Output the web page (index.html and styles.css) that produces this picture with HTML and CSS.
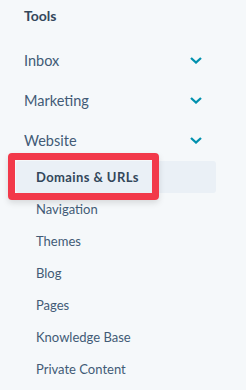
FILE: index.html
```html
<!DOCTYPE html>
<html lang="en">
<head>
  <meta charset="UTF-8">
  <meta name="viewport" content="width=device-width, initial-scale=1.0">
  <title>Tools</title>
  <link rel="stylesheet" href="styles.css">
</head>
<body>
  <nav class="sidebar">
    <h2 class="sidebar-title">Tools</h2>

    <!-- Top level sections -->
    <div class="section">
      <span>Inbox</span>
      <svg class="chevron" viewBox="0 0 12 7"><path d="M1 1l5 4.5L11 1"/></svg>
    </div>
    <div class="section">
      <span>Marketing</span>
      <svg class="chevron" viewBox="0 0 12 7"><path d="M1 1l5 4.5L11 1"/></svg>
    </div>
    <div class="section">
      <span>Website</span>
      <svg class="chevron" viewBox="0 0 12 7"><path d="M1 1l5 4.5L11 1"/></svg>
    </div>

    <!-- Website sub menu -->
    <ul class="sub-list">
      <li class="sub-item active">Domains &amp; URLs<span class="callout"></span></li>
      <li class="sub-item">Navigation</li>
      <li class="sub-item">Themes</li>
      <li class="sub-item">Blog</li>
      <li class="sub-item">Pages</li>
      <li class="sub-item">Knowledge Base</li>
      <li class="sub-item">Private Content</li>
    </ul>
  </nav>
</body>
</html>
```

FILE: styles.css
```css
/* Reset */
* {
  margin: 0;
  padding: 0;
  box-sizing: border-box;
  font-family: Lato, "Noto Sans", sans-serif;
}

body {
  background-color: #f5f8fa;
  color: #33475b;
}

/* Sidebar */
.sidebar {
  width: 216px;
  padding-top: 6px;
}

.sidebar-title {
  font-size: 14px;
  font-weight: bold;
  line-height: 20px;
  padding-left: 24px;
  margin-bottom: 14px;
  color: #33475b;
}

.section {
  display: flex;
  justify-content: space-between;
  align-items: center;
  height: 40px;
  padding: 0 14px 0 24px;
  font-size: 14.5px;
  color: #425b76;
}

.chevron {
  width: 12px;
  height: 7px;
  fill: none;
  stroke: #0091ae;
  stroke-width: 2.3;
}

/* Sub menu */
.sub-list {
  list-style: none;
  margin-top: 1px;
}

.sub-item {
  position: relative;
  height: 32px;
  line-height: 32px;
  margin-left: 16px;
  padding-left: 20px;
  font-size: 13px;
  color: #425b76;
  border-radius: 3px;
}

.sub-item.active {
  background-color: #eaf0f6;
  font-weight: bold;
  letter-spacing: 0.4px;
  color: #33475b;
}

/* Red highlight drawn over the active item */
.callout {
  position: absolute;
  left: -8px;
  top: -8px;
  width: 151px;
  height: 47px;
  border: 7px solid #f2394a;
  border-radius: 4px;
  box-shadow: 0 3px 6px rgba(0, 0, 0, 0.12);
}
```
